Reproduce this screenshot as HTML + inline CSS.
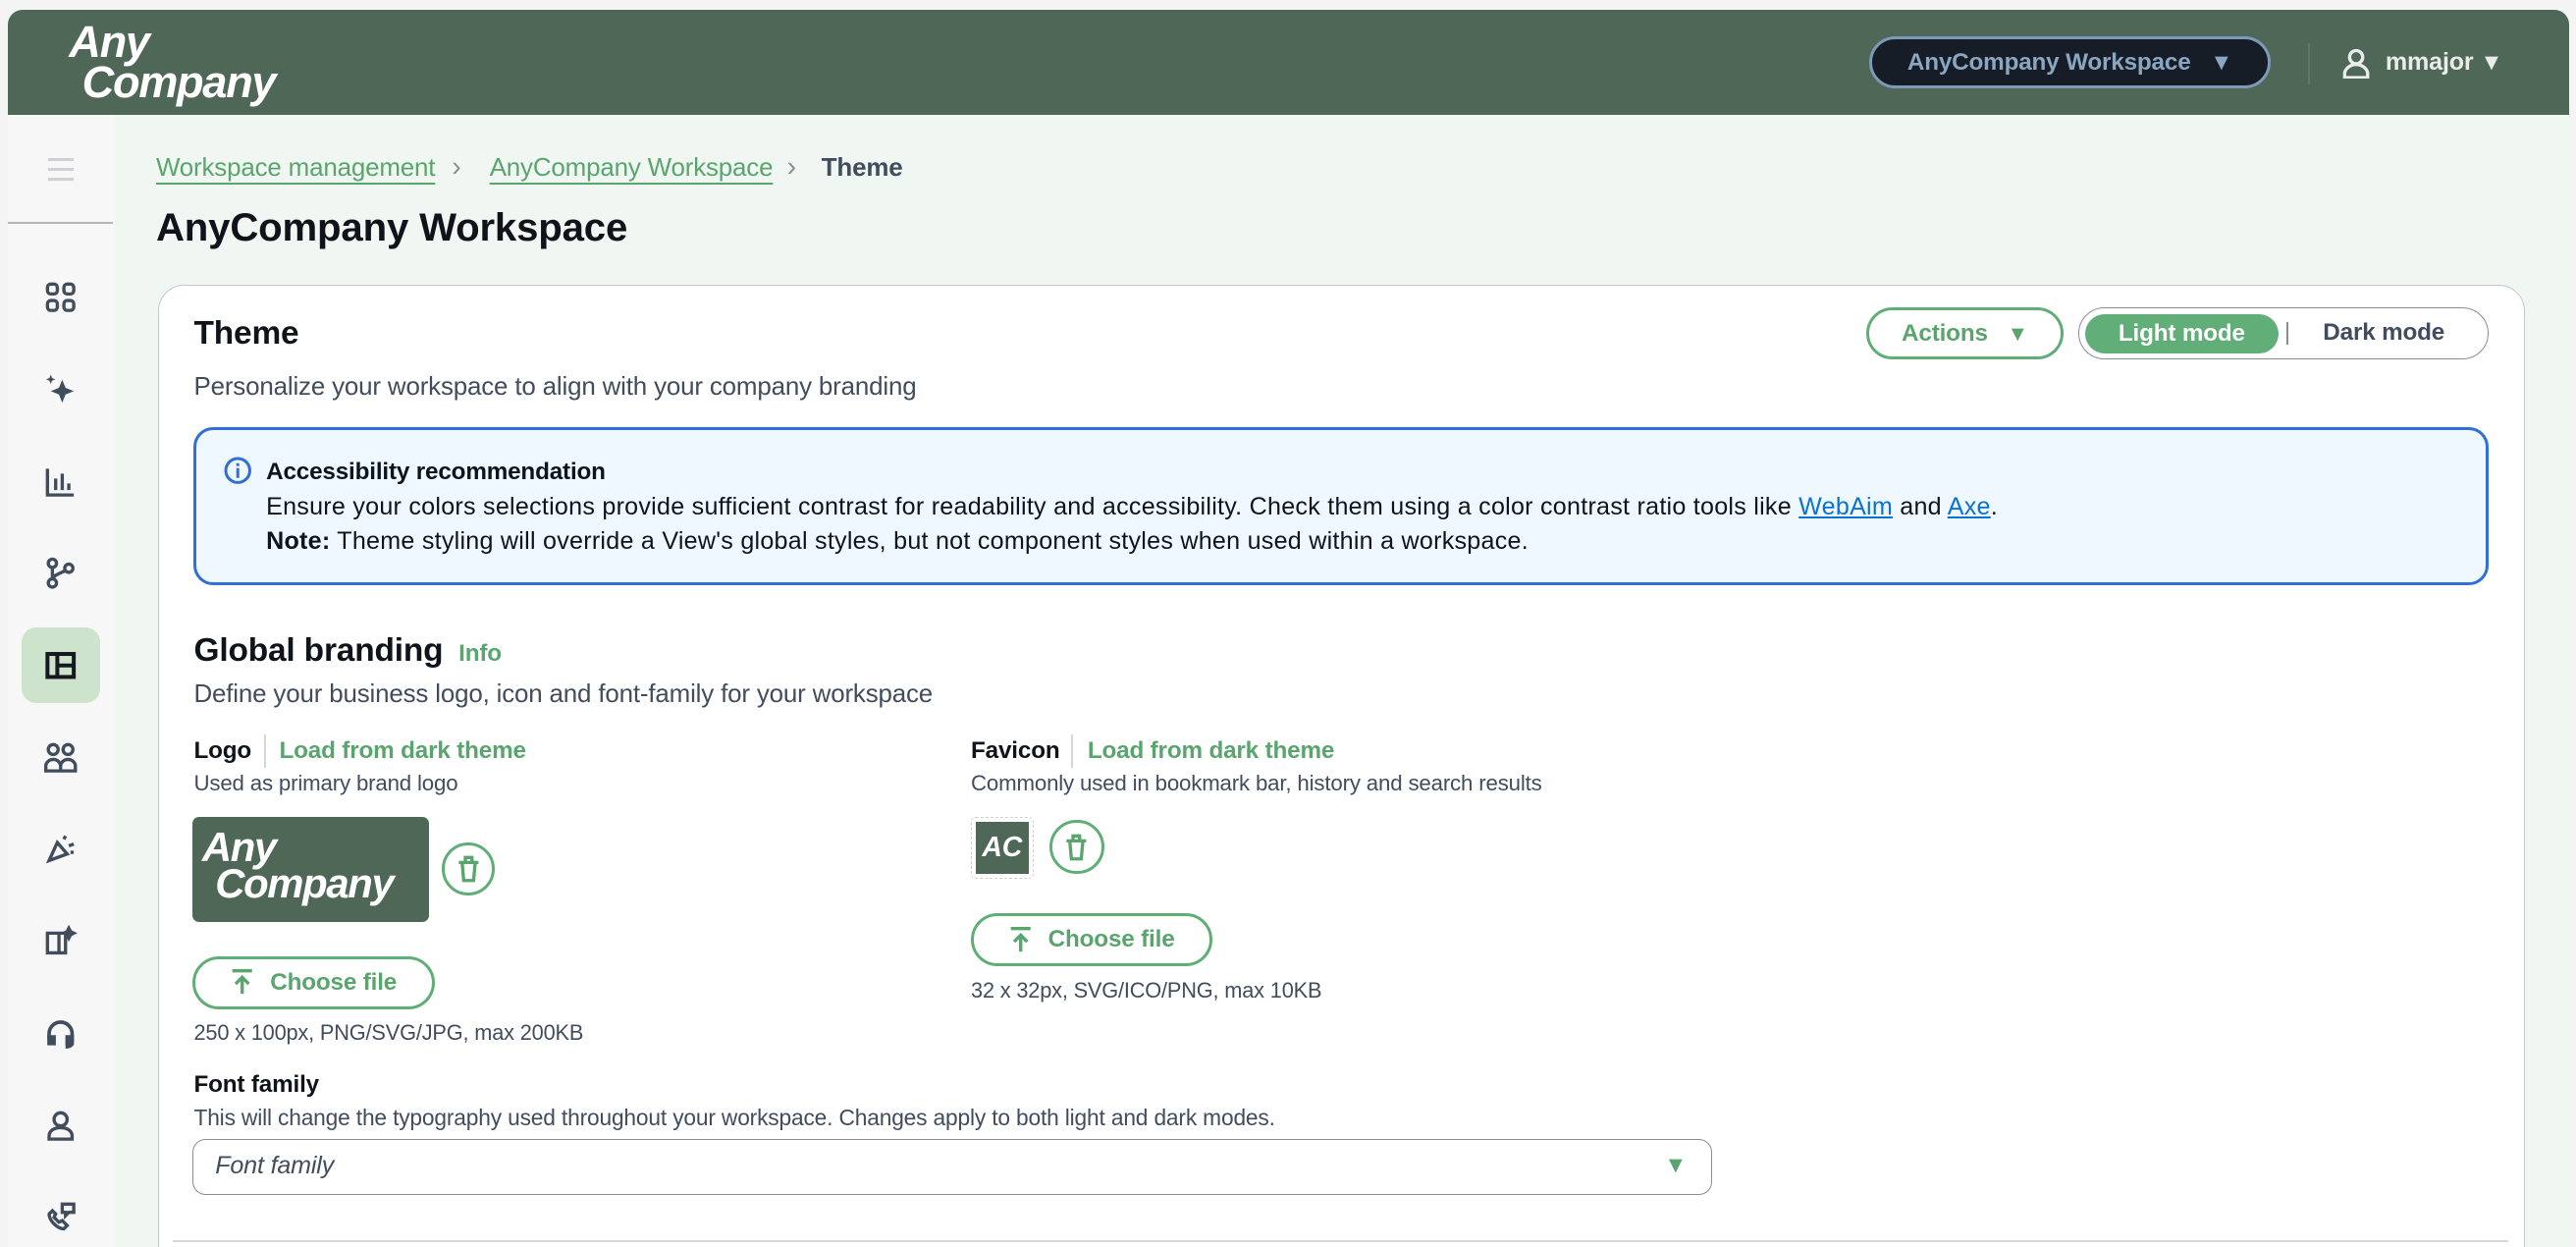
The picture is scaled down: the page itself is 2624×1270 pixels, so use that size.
<!DOCTYPE html>
<html><head><meta charset="utf-8"><style>
*{box-sizing:border-box;margin:0;padding:0}
html,body{width:2624px;height:1270px;overflow:hidden;background:#f4f4f4}
#w{zoom:1.67347;width:1568px;height:759px;position:relative;font-family:"Liberation Sans",sans-serif;color:#0f141a;letter-spacing:-0.1px}
.a{position:absolute;white-space:nowrap}
.hdr{left:5px;top:6px;width:1559px;height:64px;background:#4e6756;border-radius:9px 9px 0 0}
.logo{color:#fff;font-style:italic;font-weight:bold;font-size:27px;line-height:24px;letter-spacing:-0.8px}
.side{left:5px;top:70px;width:65px;height:689px;background:#f6f7f6}
.main{left:70px;top:70px;width:1494px;height:689px;background:#f0f6f1}
.g{color:#5aa56e}
.card{left:96px;top:173px;width:1441px;height:620px;background:#fff;border:1px solid #c6c6cd;border-radius:16px}
.btn{border:2px solid #5fae76;border-radius:20px;color:#5aa56e;font-weight:bold;font-size:14.5px;display:flex;align-items:center;justify-content:center}
.sub{color:#414d5c}
.ic{position:absolute;left:27px;width:20px;height:20px}
</style></head><body><div id="w">
<div class="a hdr"></div>
<div class="a logo" style="left:42px;top:14px">Any</div>
<div class="a logo" style="left:50px;top:38px">Company</div>
<div class="a" style="left:1138px;top:22px;width:244px;height:32px;background:#161d26;border:2px solid #7b9bb8;border-radius:17px;color:#8aa6c1;font-weight:bold;font-size:14.5px;display:flex;align-items:center;justify-content:center">AnyCompany Workspace&nbsp;&nbsp;&nbsp;<span style="font-size:14px">▼</span></div>
<div class="a" style="left:1405px;top:26px;width:1px;height:26px;background:#5f7866"></div>
<svg class="a" style="left:1425px;top:29px" width="18" height="19" viewBox="0 0 18 19" fill="none" stroke="#e9ece9" stroke-width="2"><circle cx="9" cy="5.5" r="4"/><path d="M2 18v-2.5c0-2.5 3-5.5 7-5.5s7 3 7 5.5V18z"/></svg>
<div class="a" style="left:1452px;top:29px;color:#e9ece9;font-weight:bold;font-size:15px">mmajor <span style="font-size:14px">▼</span></div>

<div class="a side"></div>
<div class="a main"></div>
<div class="a" style="left:5px;top:135px;width:64px;height:1px;background:#b4b4bb"></div>
<div class="a" style="left:29px;top:96px;width:16px;height:2px;background:#d0d0d4;box-shadow:0 6px 0 #d0d0d4,0 12px 0 #d0d0d4"></div>
<div class="a" style="left:13px;top:382px;width:48px;height:46px;background:#cde3cc;border-radius:9px"></div>
<svg class="ic" style="top:171px" viewBox="0 0 20 20" fill="none" stroke="#414d5c" stroke-width="2"><rect x="2" y="2" width="6" height="6" rx="2"/><rect x="12" y="2" width="6" height="6" rx="2"/><rect x="2" y="12" width="6" height="6" rx="2"/><rect x="12" y="12" width="6" height="6" rx="2"/></svg>
<svg class="ic" style="top:227px" viewBox="0 0 20 20" fill="#414d5c"><path d="M11 4l2 5 5 2-5 2-2 5-2-5-5-2 5-2z"/><path d="M4 1l.8 2 2 .8-2 .8L4 6.6l-.8-2-2-.8 2-.8z"/></svg>
<svg class="ic" style="top:283px" viewBox="0 0 20 20" fill="none" stroke="#414d5c" stroke-width="2"><path d="M2 2v16h16M7 8v7M11 5v10M15 11v4"/></svg>
<svg class="ic" style="top:339px" viewBox="0 0 20 20" fill="none" stroke="#414d5c" stroke-width="2"><circle cx="5" cy="4" r="2.5"/><circle cx="5" cy="16" r="2.5"/><circle cx="15" cy="7" r="2.5"/><path d="M5 6.5v7M12.8 8.5C10 10 6 11 5 13.5"/></svg>
<svg class="ic" style="top:395px" viewBox="0 0 20 20" fill="none" stroke="#16191f" stroke-width="2.4"><rect x="2" y="3" width="16" height="14"/><path d="M8 3v14M8 10h10"/></svg>
<svg class="ic" style="top:451px" viewBox="0 0 20 20" fill="none" stroke="#414d5c" stroke-width="2"><circle cx="5.5" cy="5" r="3"/><circle cx="14.5" cy="5" r="3"/><path d="M1 18v-3c0-2 2-4 4.5-4S10 13 10 15v3zM10 18v-3c0-2 2-4 4.5-4S19 13 19 15v3z"/></svg>
<svg class="ic" style="top:507px" viewBox="0 0 20 20" fill="none" stroke="#414d5c" stroke-width="2"><path d="M3 17l5-11 6 7z M12 4l1-2M15 8l3-1M16 12h2"/></svg>
<svg class="ic" style="top:563px" viewBox="0 0 20 20" fill="none" stroke="#414d5c" stroke-width="2"><path d="M2 5h7v12H2zM9 5h4v12H9"/><path d="M15 2l1 2 2 1-2 1-1 2-1-2-2-1 2-1z" fill="#414d5c"/></svg>
<svg class="ic" style="top:619px" viewBox="0 0 20 20" fill="none" stroke="#414d5c" stroke-width="2.2"><path d="M3 14v-4a7 7 0 0114 0v5c0 2-1 3-4 3"/><rect x="3" y="12" width="3" height="4" fill="#414d5c"/><rect x="14" y="12" width="3" height="4" fill="#414d5c"/></svg>
<svg class="ic" style="top:675px" viewBox="0 0 20 20" fill="none" stroke="#414d5c" stroke-width="2"><circle cx="10" cy="6" r="4"/><path d="M3 18v-2c0-3 3-5 7-5s7 2 7 5v2z"/></svg>
<svg class="ic" style="top:731px" viewBox="0 0 20 20" fill="none" stroke="#414d5c" stroke-width="2"><path d="M5 6l-2 2c0 4 5 9 9 9l2-2-3-3-2 1c-1-1-2-2-3-3l1-2z"/><path d="M11 2h7v5h-3l-2 2V7h-2z"/></svg>

<div class="a g" style="left:95px;top:94px;font-size:15.5px;text-decoration:underline;text-underline-offset:4px">Workspace management</div>
<div class="a" style="left:275px;top:92px;font-size:17px;color:#8c8c94">›</div>
<div class="a g" style="left:298px;top:94px;font-size:15.5px;text-decoration:underline;text-underline-offset:4px">AnyCompany Workspace</div>
<div class="a" style="left:479px;top:92px;font-size:17px;color:#8c8c94">›</div>
<div class="a" style="left:500px;top:94px;font-size:15.5px;font-weight:bold;color:#414d5c">Theme</div>
<div class="a" style="left:95px;top:125px;font-size:24px;font-weight:bold">AnyCompany Workspace</div>

<div class="a card"></div>
<div class="a" style="left:118px;top:192px;font-size:20px;font-weight:bold">Theme</div>
<div class="a sub" style="left:118px;top:227px;font-size:15.5px">Personalize your workspace to align with your company branding</div>
<div class="a btn" style="left:1136px;top:187px;width:120px;height:32px">Actions&nbsp;&nbsp;&nbsp;<span style="font-size:13px">▼</span></div>
<div class="a" style="left:1265px;top:187px;width:250px;height:32px;border:1px solid #8c8c94;border-radius:17px"></div>
<div class="a" style="left:1269px;top:191px;width:118px;height:24px;background:#62ae78;border-radius:13px;color:#fff;font-weight:bold;font-size:14.5px;display:flex;align-items:center;justify-content:center">Light mode</div>
<div class="a" style="left:1392px;top:196px;width:1px;height:14px;background:#8c8c94"></div>
<div class="a" style="left:1414px;top:194px;font-weight:bold;font-size:14.5px;color:#414d5c">Dark mode</div>

<div class="a" style="left:118px;top:260px;width:1397px;height:96px;background:#f0f8ff;border:2px solid #2f6fd8;border-radius:12px"></div>
<svg class="a" style="left:136px;top:278px" width="17" height="17" viewBox="0 0 17 17"><circle cx="8.5" cy="8.5" r="7.3" fill="none" stroke="#2f6fd8" stroke-width="1.8"/><rect x="7.6" y="7" width="1.8" height="6" fill="#2f6fd8"/><rect x="7.6" y="4" width="1.8" height="1.8" fill="#2f6fd8"/></svg>
<div class="a" style="left:162px;top:279px;font-size:14.5px;font-weight:bold">Accessibility recommendation</div>
<div class="a" style="left:162px;top:300px;font-size:15px;letter-spacing:0.15px">Ensure your colors selections provide sufficient contrast for readability and accessibility. Check them using a color contrast ratio tools like <span style="color:#0972d3;text-decoration:underline">WebAim</span> and <span style="color:#0972d3;text-decoration:underline">Axe</span>.</div>
<div class="a" style="left:162px;top:321px;font-size:15px;letter-spacing:0.15px"><b>Note:</b> Theme styling will override a View's global styles, but not component styles when used within a workspace.</div>

<div class="a" style="left:118px;top:385px;font-size:20px;font-weight:bold">Global branding <span class="g" style="font-size:14.5px">&nbsp;Info</span></div>
<div class="a sub" style="left:118px;top:414px;font-size:15.5px">Define your business logo, icon and font-family for your workspace</div>

<div class="a" style="left:118px;top:449px;font-size:14.5px;font-weight:bold">Logo</div>
<div class="a" style="left:161px;top:447px;width:1px;height:20px;background:#d5d5da"></div>
<div class="a g" style="left:170px;top:449px;font-size:14.5px;font-weight:bold">Load from dark theme</div>
<div class="a sub" style="left:118px;top:469px;font-size:13.3px">Used as primary brand logo</div>
<div class="a" style="left:117px;top:497px;width:144px;height:64px;background:#4e6756;border-radius:4px"></div>
<div class="a logo" style="left:123px;top:504px;font-size:25px;line-height:24px">Any</div>
<div class="a logo" style="left:131px;top:526px;font-size:25px;line-height:24px">Company</div>
<div class="a" style="left:269px;top:513px;width:32px;height:32px;border:2px solid #5fae76;border-radius:50%"></div>
<svg class="a" style="left:277px;top:520px" width="16" height="18" viewBox="0 0 16 18" fill="none" stroke="#5aa56e" stroke-width="2"><path d="M2 5h12M6 5V2h4v3M4 5l1 11h6l1-11"/></svg>
<div class="a btn" style="left:117px;top:582px;width:148px;height:32px">
<svg width="14" height="16" viewBox="0 0 14 16" fill="none" stroke="#5aa56e" stroke-width="2" style="margin-right:10px"><path d="M1 1h12M7 15V5M3 9l4-4 4 4"/></svg>Choose file</div>
<div class="a sub" style="left:118px;top:621px;font-size:13px">250 x 100px, PNG/SVG/JPG, max 200KB</div>

<div class="a" style="left:591px;top:449px;font-size:14.5px;font-weight:bold">Favicon</div>
<div class="a" style="left:652px;top:447px;width:1px;height:20px;background:#d5d5da"></div>
<div class="a g" style="left:662px;top:449px;font-size:14.5px;font-weight:bold">Load from dark theme</div>
<div class="a sub" style="left:591px;top:469px;font-size:13.3px">Commonly used in bookmark bar, history and search results</div>
<div class="a" style="left:591px;top:497px;width:38px;height:38px;border:1px dashed #d0d0d4;border-radius:3px"></div>
<div class="a" style="left:594px;top:500px;width:32px;height:32px;background:#4e6756;color:#fff;font-style:italic;font-weight:bold;font-size:17px;display:flex;align-items:center;justify-content:center">AC</div>
<div class="a" style="left:639px;top:499px;width:33px;height:33px;border:2px solid #5fae76;border-radius:50%"></div>
<svg class="a" style="left:647px;top:507px" width="16" height="18" viewBox="0 0 16 18" fill="none" stroke="#5aa56e" stroke-width="2"><path d="M2 5h12M6 5V2h4v3M4 5l1 11h6l1-11"/></svg>
<div class="a btn" style="left:591px;top:556px;width:147px;height:32px">
<svg width="14" height="16" viewBox="0 0 14 16" fill="none" stroke="#5aa56e" stroke-width="2" style="margin-right:10px"><path d="M1 1h12M7 15V5M3 9l4-4 4 4"/></svg>Choose file</div>
<div class="a sub" style="left:591px;top:595px;font-size:13px">32 x 32px, SVG/ICO/PNG, max 10KB</div>

<div class="a" style="left:118px;top:652px;font-size:14.5px;font-weight:bold">Font family</div>
<div class="a sub" style="left:118px;top:672px;font-size:13.6px">This will change the typography used throughout your workspace. Changes apply to both light and dark modes.</div>
<div class="a" style="left:117px;top:693px;width:925px;height:34px;border:1px solid #8c8c94;border-radius:8px"></div>
<div class="a sub" style="left:131px;top:701px;font-size:15px;font-style:italic">Font family</div>
<div class="a g" style="left:1013px;top:701px;font-size:14px">▼</div>
<div class="a" style="left:105px;top:755px;width:1422px;height:1px;background:#d5d5da"></div>
</div></body></html>
